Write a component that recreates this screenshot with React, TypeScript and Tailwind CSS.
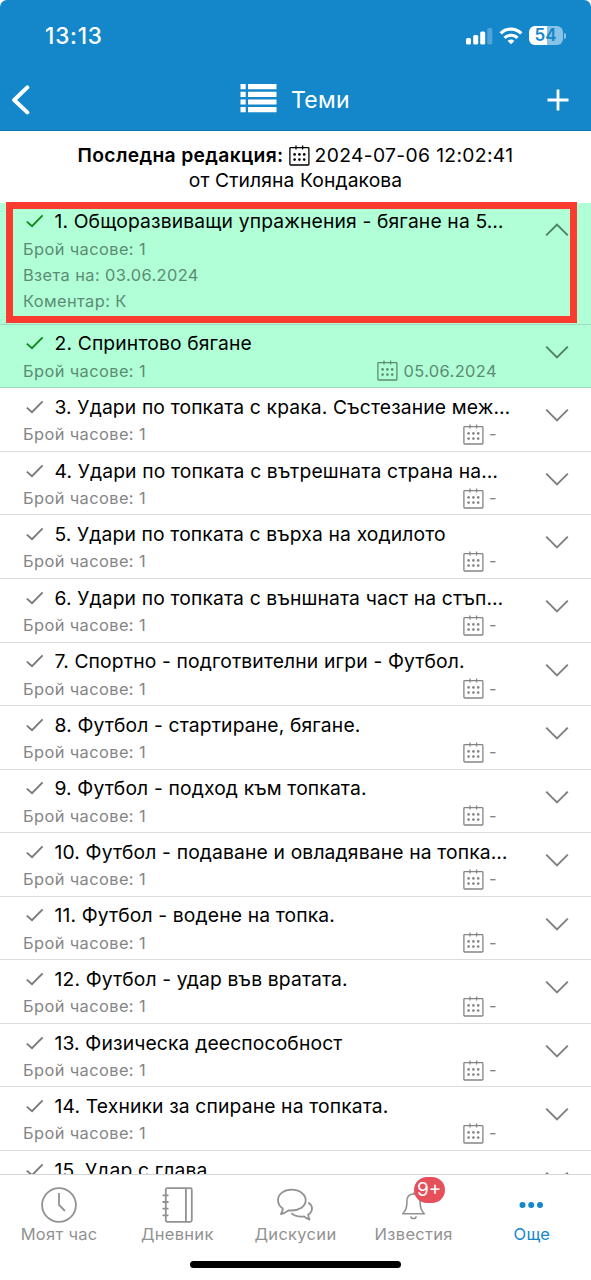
import React from 'react';

type Topic = {
  title: string;
  hours: number;
  date?: string;
  comment?: string;
  taken?: boolean;
  expanded?: boolean;
};

const topics: Topic[] = [
  { title: '1. Общоразвиващи упражнения - бягане на 5…', hours: 1, date: '03.06.2024', comment: 'К', taken: true, expanded: true },
  { title: '2. Спринтово бягане', hours: 1, date: '05.06.2024', taken: true },
  { title: '3. Удари по топката с крака. Състезание меж…', hours: 1 },
  { title: '4. Удари по топката с вътрешната страна на…', hours: 1 },
  { title: '5. Удари по топката с върха на ходилото', hours: 1 },
  { title: '6. Удари по топката с външната част на стъп…', hours: 1 },
  { title: '7. Спортно - подготвителни игри - Футбол.', hours: 1 },
  { title: '8. Футбол - стартиране, бягане.', hours: 1 },
  { title: '9. Футбол - подход към топката.', hours: 1 },
  { title: '10. Футбол - подаване и овладяване на топка…', hours: 1 },
  { title: '11. Футбол - водене на топка.', hours: 1 },
  { title: '12. Футбол - удар във вратата.', hours: 1 },
  { title: '13. Физическа дееспособност', hours: 1 },
  { title: '14. Техники за спиране на топката.', hours: 1 },
  { title: '15. Удар с глава.', hours: 1 }
];

function CalendarIcon({ className }: { className?: string }) {
  return (
    <svg viewBox="0 0 21 21" className={className} fill="none" stroke="currentColor" strokeWidth="1.3">
      <rect x="0.9" y="2.6" width="19" height="17.4" rx="0.8" />
      <path d="M7 0.5v4M13.6 0.5v4" />
      <g fill="currentColor" stroke="none">
        <circle cx="5.6" cy="9.4" r="1.3" />
        <circle cx="10.4" cy="9.4" r="1.3" />
        <circle cx="15.2" cy="9.4" r="1.3" />
        <circle cx="5.6" cy="14.6" r="1.3" />
        <circle cx="10.4" cy="14.6" r="1.3" />
        <circle cx="15.2" cy="14.6" r="1.3" />
      </g>
    </svg>
  );
}

function StatusBar() {
  return (
    <div className="h-[70px] pt-[21px] pl-[45px] pr-[25px] flex justify-between items-start text-white">
      <span className="text-[22.5px] leading-[30px] font-medium tracking-[0.8px]">13:13</span>
      <div className="flex items-center pt-[5px]">
        <svg className="w-[27px] h-[18px]" viewBox="0 0 27 18" fill="currentColor">
          <rect x="0" y="11" width="5" height="6.6" rx="1.5" />
          <rect x="7.2" y="8" width="5" height="9.6" rx="1.5" />
          <rect x="14.2" y="4.6" width="5" height="13" rx="1.5" />
          <rect x="21.3" y="1" width="5" height="16.6" rx="1.5" opacity="0.25" />
        </svg>
        <svg className="w-[24px] h-[18px] ml-[6px]" viewBox="0 0 24 18" fill="none" stroke="currentColor" strokeWidth="3.1">
          <path d="M1.7 6.4a14.6 14.6 0 0 1 20.6 0" />
          <path d="M5.5 10.9a9.2 9.2 0 0 1 13 0" />
          <path d="M12 17.3l-3.4-3.4a4.8 4.8 0 0 1 6.8 0z" fill="currentColor" stroke="none" />
        </svg>
        <div className="ml-[6px] w-[34px] h-[19px] rounded-[6px] bg-[linear-gradient(90deg,#fff_54%,#88c2e6_54%)] flex items-center justify-center text-[#1487ca] text-[17px] font-semibold leading-none">
          54
        </div>
        <div className="ml-[1.5px] w-[2px] h-[6px] rounded-r-full bg-[#88c2e6]" />
      </div>
    </div>
  );
}

function Header() {
  return (
    <header className="bg-[#1487ca] h-[131px] rounded-t-[7px] border-b border-[#0f76b6]">
      <StatusBar />
      <div className="h-[60px] flex items-center pl-[11px] pr-[22px] text-white">
        <svg className="w-[20px] h-[30px]" viewBox="0 0 20 30" fill="none" stroke="currentColor" strokeWidth="4" strokeLinecap="round" strokeLinejoin="round">
          <path d="M16.3 2.4L3.2 15l13.1 12.4" />
        </svg>
        <div className="flex-1 flex items-center pl-[209px]">
          <svg className="w-[37px] h-[29px] mt-[-3px]" viewBox="0 0 37 29" fill="currentColor">
            <path d="M.5 0h5.2v5.2H.5zM8 0h28.5v5.2H8zM.5 7.7h5.2v5.2H.5zM8 7.7h28.5v5.2H8zM.5 15.4h5.2v5.2H.5zM8 15.4h28.5v5.2H8zM.5 23h5.2v5.2H.5zM8 23h28.5v5.2H8z" />
          </svg>
          <h1 className="ml-[14px] text-[23px] leading-[30px] tracking-[0.3px]">Теми</h1>
        </div>
        <svg className="w-[22px] h-[22px]" viewBox="0 0 22 22" stroke="currentColor" strokeWidth="2.8">
          <path d="M11 0.5v21M0.5 11h21" />
        </svg>
      </div>
    </header>
  );
}

function TopicRow({ topic }: { topic: Topic }) {
  return (
    <li
      className={
        topic.taken
          ? 'shrink-0 flex border-b border-[#9fdcbf] bg-[#b0ffd6] pl-[23px] pr-[22px]'
          : 'shrink-0 flex border-b border-[#dcdcdc] bg-white pl-[23px] pr-[22px]'
      }
    >
      <div className={topic.expanded ? 'w-[474px] h-[120.8px] pt-[4px]' : 'w-[474px] h-[62.56px] pt-[4.4px]'}>
        <div className="flex items-center h-[28.6px]">
          <svg
            className={topic.taken ? 'shrink-0 w-[18px] h-[14px] ml-[3px] text-[#118a1c]' : 'shrink-0 w-[18px] h-[14px] ml-[3px] text-[#7a7a7a]'}
            viewBox="0 0 18 14"
            fill="none"
            stroke="currentColor"
            strokeWidth="1.9"
          >
            <path d="M0.8 7.6L6 12.2L16.6 1.4" />
          </svg>
          <span className="ml-[10.5px] whitespace-nowrap text-[19.3px] leading-[28px] tracking-[0.14px] text-black">{topic.title}</span>
        </div>
        <div
          className={
            topic.taken
              ? 'flex justify-between text-[16.4px] leading-[26.4px] tracking-[0.4px] text-[#5c8b73]'
              : 'flex justify-between text-[16.4px] leading-[26.4px] tracking-[0.4px] text-[#858585]'
          }
        >
          <div>
            <p>Брой часове: {topic.hours}</p>
            {topic.expanded && (
              <>
                <p>Взета на: {topic.date}</p>
                <p>Коментар: {topic.comment}</p>
              </>
            )}
          </div>
          {!topic.expanded && (
            <div className="flex items-center">
              <CalendarIcon className="w-[21px] h-[21px] mr-[5px]" />
              <span>{topic.date ?? '-'}</span>
            </div>
          )}
        </div>
      </div>
      <svg
        className={topic.taken ? 'w-[24px] h-[14px] mt-[20px] ml-auto text-[#4f8068]' : 'w-[24px] h-[14px] mt-[20px] ml-auto text-[#808080]'}
        viewBox="0 0 24 14"
        fill="none"
        stroke="currentColor"
        strokeWidth="2"
      >
        <path d={topic.expanded ? 'M1.2 12.4L12 1.6L22.8 12.4' : 'M1.2 1.6L12 12.4L22.8 1.6'} />
      </svg>
    </li>
  );
}

function TabBar() {
  const tabs = [
    {
      label: 'Моят час',
      icon: (
        <svg className="w-[38px] h-[38px]" viewBox="0 0 38 38" fill="none" stroke="currentColor" strokeWidth="1.8">
          <circle cx="19" cy="19" r="16.9" />
          <path d="M19 7v12l6 6" />
        </svg>
      )
    },
    {
      label: 'Дневник',
      icon: (
        <svg className="w-[38px] h-[38px]" viewBox="0 0 38 38" fill="none" stroke="currentColor" strokeWidth="1.8">
          <rect x="7.8" y="2.2" width="26" height="33.6" rx="1.5" />
          <path d="M27.9 2.2v33.6M4.5 9.3h6M4.5 16h6M4.5 22.7h6M4.5 29.3h6" />
        </svg>
      )
    },
    {
      label: 'Дискусии',
      icon: (
        <svg className="w-[38px] h-[38px]" viewBox="0 0 38 38" fill="none" stroke="currentColor" strokeWidth="1.8" strokeLinejoin="round">
          <path d="M15.5 3.6C8 3.6 2 8.2 2 14.3c0 3.5 2 6.4 4.8 8.3-.1 2.1-.8 3.7-1.9 5.5 3.2-.6 5.7-2.1 7.6-3.7 10.6.9 17.2-4.1 17.2-10.1C29.7 8.2 23.4 3.6 15.5 3.6z" />
          <path d="M32.3 16.5c2.3 1.6 3.7 3.7 3.7 6 0 2.500-1.5 4.600-3.8 6.100 0 1.800.4 3 1.300 4.900-2.400-.5-4.100-1.700-5.500-3.100-5.300.7-9.700-.6-12.500-3.300" />
        </svg>
      )
    },
    {
      label: 'Известия',
      badge: '9+',
      icon: (
        <svg className="w-[38px] h-[38px]" viewBox="0 0 38 38" fill="none" stroke="currentColor" strokeWidth="1.6" strokeLinejoin="round">
          <path d="M18.5 6.500v2M18.5 8c-4.500 0-6.600 3-6.600 7.500 0 6.300-.9 8.500-4.200 12.200h21.600c-3.300-3.700-4.200-5.900-4.200-12.200C25.100 11 23 8 18.5 8z" />
          <path d="M15.800 30.300c.4 3 5 3 5.400 0" />
        </svg>
      )
    },
    {
      label: 'Още',
      active: true,
      icon: (
        <svg className="w-[38px] h-[38px]" viewBox="0 0 38 38" fill="currentColor">
          <circle cx="9.5" cy="19" r="3" />
          <circle cx="18.2" cy="19" r="3" />
          <circle cx="27" cy="19" r="3" />
        </svg>
      )
    }
  ];

  return (
    <nav className="h-[106px] border-t border-[#d6d6d6] bg-white flex flex-col items-center">
      <div className="w-full grid grid-cols-5 pt-[11px] h-[85px]">
        {tabs.map((tab) => (
          <div
            key={tab.label}
            className={tab.active ? 'flex flex-col items-center text-[#1487ca]' : 'flex flex-col items-center text-[#929292]'}
          >
            <div className="relative">
              {tab.icon}
              {tab.badge && (
                <span className="absolute left-[19px] top-[-9px] w-[31px] h-[26px] rounded-full bg-[#e5505a] text-white text-[19px] leading-[26px] text-center">
                  {tab.badge}
                </span>
              )}
            </div>
            <span className="text-[16.5px] leading-[20px] tracking-[0.3px] whitespace-nowrap">{tab.label}</span>
          </div>
        ))}
      </div>
      <div className="w-[211px] h-[7px] mt-[1px] rounded-full bg-black" />
    </nav>
  );
}

export default function App() {
  return (
    <main className="w-[591px] h-[1280px] overflow-hidden flex flex-col bg-white font-['Inter','Noto_Sans',sans-serif]">
      <Header />
      <div className="h-[72px] pt-[12px] text-center text-[19.3px] leading-[25px] text-black">
        <div className="flex items-center justify-center tracking-[0.34px]">
          <span className="font-semibold">Последна редакция:</span>
          <CalendarIcon className="w-[21px] h-[21px] mx-[5px]" />
          <span>2024-07-06 12:02:41</span>
        </div>
        <div className="tracking-[0.1px]">от Стиляна Кондакова</div>
      </div>
      <div className="relative flex-1 min-h-0">
        <ul className="flex flex-col h-full overflow-hidden">
          {topics.map((topic) => (
            <TopicRow key={topic.title} topic={topic} />
          ))}
        </ul>
        {/* highlight around the expanded topic */}
        <div className="absolute left-[6px] top-[-1px] w-[571px] h-[121px] border-[7px] border-[#fa3c30]" />
      </div>
      <TabBar />
    </main>
  );
}
